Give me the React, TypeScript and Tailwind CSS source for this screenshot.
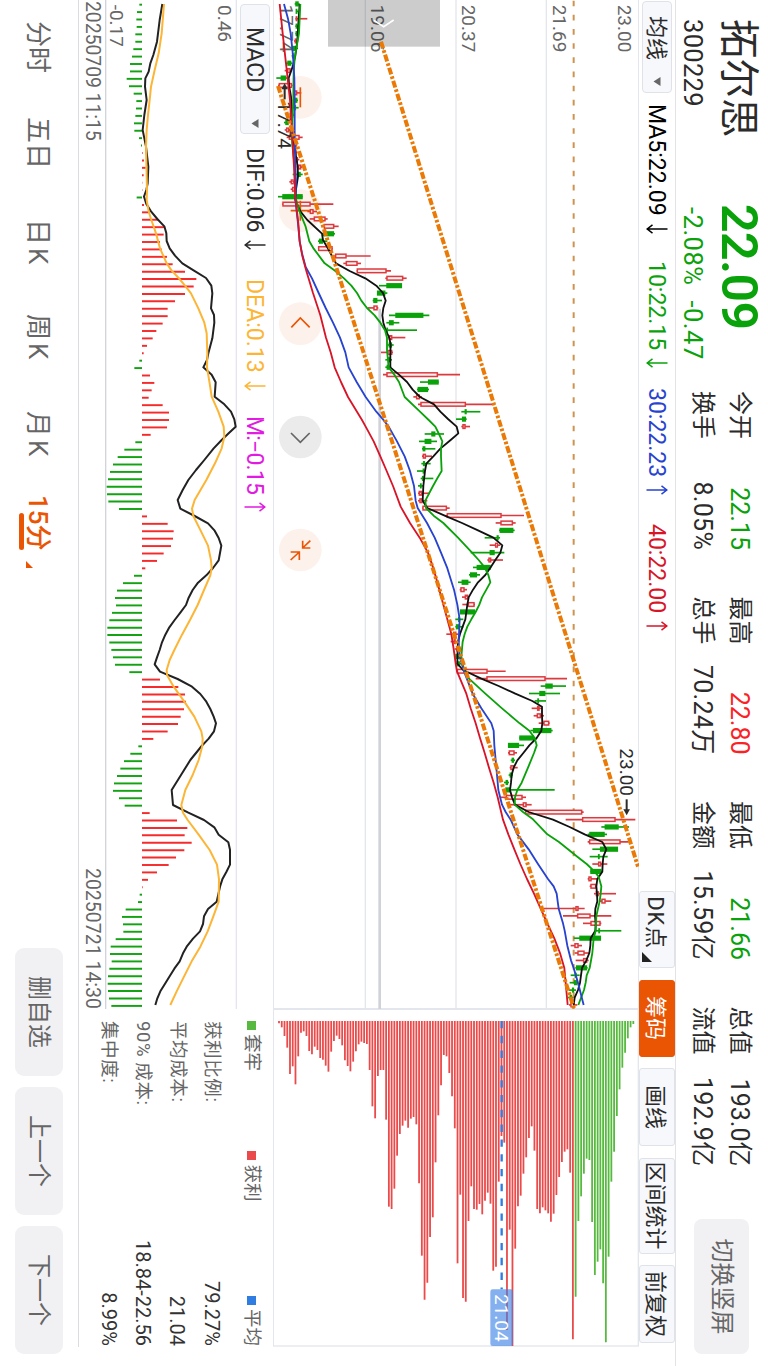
import React from 'react';
import clsx from 'clsx';

type Point = [number, number];
// [color, low, bodyLow, bodyHigh, high]
type Candle = ['r' | 'g', number, number, number, number];

const GREEN = '#0aa20a';
const RED = '#dc3a3e';
const ORANGE = '#ea5504';
const GRID = '#e3e6ec';

const candles: Candle[] = [
  ['g', 80, 82, 92, 95], ['g', 84, 85, 88, 90], ['r', 82, 84, 88, 118], ['g', 82, 84, 88, 90],
  ['g', 82, 84, 88, 90], ['r', 78, 80, 86, 88], ['g', 72, 75, 84, 90], ['g', 71, 73, 77, 80],
  ['g', 54, 58, 70, 73], ['r', 50, 57, 68, 72], ['g', 25, 38, 54, 60], ['r', 30, 32, 72, 74],
  ['r', 75, 78, 88, 100], ['g', 74, 76, 88, 90], ['g', 75, 78, 84, 92], ['r', 68, 70, 76, 78],
  ['g', 48, 52, 62, 66], ['r', 50, 54, 64, 68], ['r', 56, 62, 95, 104], ['r', 74, 76, 86, 88],
  ['r', 78, 80, 86, 88], ['r', 80, 82, 90, 94], ['r', 86, 90, 100, 103], ['g', 74, 88, 98, 104],
  ['r', 64, 68, 77, 80], ['r', 68, 72, 82, 84], ['g', 30, 43, 104, 104], ['r', 43, 43, 128, 196],
  ['r', 118, 125, 137, 147], ['r', 125, 137, 173, 179], ['r', 160, 167, 199, 212], ['g', 163, 165, 198, 201],
  ['g', 150, 153, 165, 178], ['r', 150, 150, 194, 194], ['r', 198, 201, 236, 308], ['r', 226, 233, 269, 279],
  ['r', 266, 266, 356, 369], ['r', 352, 355, 406, 416], ['g', 333, 355, 402, 402], ['g', 327, 327, 352, 358],
  ['g', 314, 316, 328, 342], ['r', 300, 316, 329, 331], ['g', 363, 382, 466, 484], ['g', 355, 363, 377, 394],
  ['g', 352, 355, 360, 447], ['r', 360, 362, 373, 412], ['g', 358, 362, 372, 377], ['r', 339, 358, 373, 375],
  ['g', 352, 360, 366, 372], ['g', 352, 356, 364, 370], ['r', 345, 355, 510, 576], ['g', 456, 480, 512, 512],
  ['g', 447, 449, 480, 483], ['r', 436, 444, 456, 462], ['r', 450, 457, 594, 680], ['g', 580, 590, 596, 637],
  ['g', 564, 582, 594, 596], ['r', 580, 583, 593, 606], ['g', 470, 490, 502, 528], ['g', 453, 470, 490, 507],
  ['g', 462, 464, 472, 502], ['r', 462, 464, 474, 492], ['g', 460, 465, 471, 488], ['g', 447, 466, 469, 470],
  ['g', 458, 462, 467, 496], ['g', 450, 456, 461, 466], ['r', 450, 452, 463, 486], ['r', 450, 454, 464, 478],
  ['r', 463, 463, 537, 545], ['r', 533, 536, 701, 768], ['r', 683, 697, 735, 743], ['g', 693, 695, 736, 740],
  ['g', 650, 686, 692, 696], ['r', 665, 681, 690, 697], ['g', 608, 665, 680, 709], ['r', 658, 661, 670, 705],
  ['g', 615, 626, 668, 670], ['g', 603, 606, 627, 636], ['g', 570, 581, 601, 608], ['r', 575, 577, 590, 597],
  ['r', 582, 590, 601, 603], ['r', 583, 599, 620, 621], ['g', 576, 576, 621, 621], ['g', 562, 570, 575, 586],
  ['g', 562, 564, 574, 586], ['r', 535, 555, 565, 570], ['r', 548, 557, 563, 575], ['r', 560, 565, 578, 580],
  ['g', 558, 562, 575, 578], ['g', 562, 566, 576, 580], ['r', 566, 566, 659, 713], ['r', 623, 655, 833, 897],
  ['g', 818, 832, 854, 894], ['g', 783, 814, 832, 876], ['g', 800, 808, 813, 834], ['r', 791, 807, 815, 822],
  ['r', 797, 806, 819, 828], ['r', 812, 826, 844, 845], ['g', 787, 795, 850, 854], ['g', 754, 754, 798, 800],
  ['g', 720, 720, 753, 768], ['r', 720, 722, 740, 747], ['g', 728, 731, 738, 741], ['r', 725, 727, 738, 749],
  ['g', 722, 725, 733, 735], ['g', 708, 713, 720, 723], ['g', 712, 712, 727, 860], ['r', 698, 713, 764, 774],
  ['r', 721, 764, 776, 791], ['r', 771, 771, 943, 947], ['r', 893, 942, 1043, 1102], ['g', 1000, 1010, 1052, 1083],
  ['g', 959, 964, 1010, 1017], ['r', 959, 963, 1058, 1082], ['g', 973, 996, 1050, 1050], ['g', 965, 990, 995, 1019],
  ['r', 973, 990, 1000, 1018], ['g', 967, 967, 1000, 1002], ['r', 959, 961, 971, 990], ['r', 965, 967, 985, 987],
  ['r', 978, 983, 993, 1044], ['r', 995, 1000, 1013, 1030], ['r', 828, 922, 932, 950], ['r', 885, 927, 968, 1030],
  ['r', 945, 967, 998, 1000], ['g', 980, 991, 996, 1060], ['g', 917, 934, 999, 999], ['r', 908, 919, 932, 942],
  ['r', 920, 928, 950, 965], ['r', 923, 945, 958, 962], ['g', 922, 924, 957, 959], ['g', 908, 920, 926, 935],
  ['g', 905, 918, 928, 930], ['g', 902, 912, 918, 924], ['g', 900, 905, 912, 915], ['r', 903, 907, 920, 928],
];

const ma5: Point[] = [
  [12, 95], [56, 92], [123, 88], [167, 82], [200, 74], [234, 62], [256, 63], [290, 69], [345, 72], [410, 74],
  [445, 80], [480, 86], [501, 89], [530, 90], [568, 84], [600, 82], [634, 97], [660, 118], [701, 162], [720, 165],
  [746, 180], [768, 192], [790, 204], [813, 245], [835, 292], [857, 325], [879, 345], [902, 353], [924, 346],
  [946, 343], [968, 346], [991, 353], [1013, 364], [1035, 368], [1057, 367], [1102, 367], [1124, 393],
  [1146, 417], [1169, 434], [1191, 456], [1213, 498], [1235, 517], [1257, 540], [1280, 566], [1300, 571],
  [1320, 548], [1346, 517], [1369, 496], [1391, 475], [1413, 471], [1458, 466], [1502, 464], [1524, 478],
  [1547, 530], [1569, 582], [1591, 630], [1613, 676], [1636, 703], [1658, 697], [1680, 682], [1702, 668],
  [1725, 652], [1747, 630], [1769, 615], [1792, 602], [1814, 598], [1836, 595], [1858, 592], [1880, 584],
  [1902, 576], [1925, 570], [1947, 569], [1991, 568], [2010, 585], [2036, 640], [2058, 692], [2081, 742],
  [2103, 793], [2120, 822], [2148, 822], [2170, 823], [2192, 820], [2214, 806], [2236, 784], [2259, 766],
  [2281, 748], [2303, 737], [2325, 731], [2348, 729], [2370, 726], [2392, 732], [2414, 741], [2436, 782],
  [2459, 855], [2481, 905], [2503, 950], [2526, 1003], [2548, 1015], [2570, 1006], [2592, 1004], [2615, 1003],
  [2637, 988], [2659, 985], [2681, 987], [2704, 988], [2726, 982], [2748, 981], [2770, 983], [2792, 982],
  [2815, 968], [2837, 967], [2859, 964], [2881, 955], [2904, 942], [2926, 939], [2948, 936], [2970, 930],
  [2993, 920], [3015, 917],
];

const ma10: Point[] = [
  [12, 97], [100, 93], [167, 81], [212, 77], [300, 76], [400, 71], [434, 73], [500, 80], [590, 82], [633, 94],
  [680, 113], [724, 124], [746, 137], [790, 170], [813, 202], [835, 228], [857, 250], [879, 267], [902, 280],
  [924, 297], [946, 320], [968, 337], [991, 351], [1013, 357], [1050, 357], [1102, 362], [1124, 379],
  [1146, 393], [1191, 410], [1235, 456], [1260, 482], [1280, 502], [1302, 513], [1324, 523], [1346, 519],
  [1369, 519], [1413, 521], [1435, 508], [1458, 495], [1502, 472], [1524, 474], [1547, 497], [1569, 526],
  [1613, 570], [1658, 612], [1680, 632], [1702, 650], [1725, 661], [1747, 667], [1769, 655], [1792, 642],
  [1814, 634], [1836, 623], [1858, 610], [1880, 598], [1902, 590], [1925, 584], [1947, 582], [1969, 580],
  [2014, 589], [2036, 603], [2081, 652], [2125, 702], [2170, 755], [2192, 784], [2214, 800], [2236, 806],
  [2259, 798], [2303, 780], [2348, 761], [2370, 748], [2392, 741], [2414, 740], [2436, 765], [2458, 795],
  [2503, 838], [2526, 873], [2570, 928], [2592, 956], [2615, 980], [2630, 992], [2659, 1000], [2681, 998],
  [2704, 995], [2748, 985], [2792, 983], [2815, 977], [2859, 973], [2904, 965], [2926, 956], [2948, 953],
  [2970, 948], [3015, 931],
];

const ma30: Point[] = [
  [12, 48], [56, 60], [100, 68], [167, 75], [234, 79], [300, 80], [400, 80], [500, 82], [545, 84], [600, 82],
  [670, 90], [724, 95], [760, 102], [801, 113], [835, 132], [879, 152], [924, 173], [968, 195], [1013, 216],
  [1057, 232], [1102, 242], [1146, 266], [1191, 293], [1235, 325], [1258, 345], [1280, 362], [1324, 387],
  [1369, 410], [1413, 426], [1458, 438], [1502, 443], [1524, 449], [1569, 477], [1613, 500], [1658, 519],
  [1702, 537], [1747, 551], [1769, 558], [1814, 568], [1858, 575], [1925, 572], [1970, 575], [2014, 588],
  [2081, 614], [2125, 640], [2170, 670], [2192, 677], [2236, 679], [2281, 683], [2325, 687], [2370, 691],
  [2414, 702], [2436, 713], [2459, 728], [2503, 748], [2548, 782], [2592, 810], [2637, 840], [2659, 857],
  [2681, 866], [2704, 869], [2726, 872], [2770, 885], [2792, 890], [2837, 898], [2881, 909], [2904, 917],
  [2948, 930], [3015, 947],
];

const ma40: Point[] = [
  [12, 35], [100, 44], [200, 55], [300, 66], [400, 72], [500, 78], [590, 82], [670, 91], [724, 95], [768, 103],
  [813, 115], [879, 135], [946, 157], [1013, 174], [1057, 188], [1102, 200], [1146, 219], [1191, 240],
  [1260, 282], [1280, 293], [1324, 317], [1369, 337], [1413, 356], [1458, 375], [1520, 398], [1569, 426],
  [1613, 455], [1658, 480], [1702, 495], [1747, 508], [1792, 520], [1858, 538], [1902, 550], [1947, 557],
  [1991, 563], [2014, 567], [2081, 595], [2125, 608], [2170, 623], [2214, 636], [2259, 650], [2303, 663],
  [2348, 677], [2392, 689], [2459, 705], [2503, 721], [2548, 739], [2592, 757], [2637, 777], [2681, 798],
  [2726, 818], [2770, 838], [2815, 859], [2859, 876], [2904, 889], [2948, 893], [3015, 899],
];

const MACD_BASE = 216;
const macdBars = [
  208, 201, 199, 200, 196, 196, 190, 186, 180, 180, 170, 177, 191, 199, 198, 196, 192, 193, 207, 213,
  218, 222, 227, 221, 217, 217, 200, 222, 240, 265, 285, 281, 270, 275, 291, 308, 345, 379, 371, 345,
  315, 293, 293, 278, 259, 248, 231, 221, 208, 193, 240, 253, 245, 236, 278, 297, 297, 291, 242, 196,
  163, 143, 129, 120, 114, 110, 111, 115, 147, 231, 293, 311, 309, 303, 281, 261, 226, 192, 159, 141,
  135, 138, 126, 118, 112, 112, 118, 124, 129, 135, 178, 270, 325, 345, 348, 342, 332, 324, 293, 250,
  205, 181, 162, 151, 141, 132, 129, 147, 164, 239, 321, 352, 344, 365, 343, 318, 296, 261, 234, 218,
  209, 204, 167, 156, 159, 160, 137, 122, 120, 125, 118, 114, 113, 114, 117, 124,
];

const dif: Point[] = [
  [12, 277], [60, 269], [125, 261], [165, 250], [190, 241], [215, 236], [235, 226], [260, 225], [300, 230],
  [345, 223], [390, 218], [410, 222], [440, 228], [500, 235], [550, 233], [570, 229], [590, 222], [612, 229],
  [634, 243], [657, 262], [679, 283], [700, 289], [723, 290], [745, 299], [767, 315], [790, 337], [812, 372],
  [834, 408], [857, 424], [880, 427], [925, 423], [945, 432], [968, 433], [1015, 427], [1060, 415], [1080, 411],
  [1102, 400], [1124, 425], [1147, 437], [1190, 434], [1213, 463], [1235, 483], [1258, 493], [1280, 497],
  [1300, 476], [1320, 455], [1345, 431], [1380, 403], [1410, 378], [1440, 355], [1470, 338], [1500, 323],
  [1526, 331], [1548, 374], [1570, 414], [1592, 434], [1614, 446], [1637, 454], [1659, 450], [1681, 446],
  [1704, 429], [1726, 409], [1748, 384], [1770, 368], [1793, 356], [1815, 348], [1838, 331], [1860, 314],
  [1882, 298], [1904, 286], [1927, 276], [1950, 269], [1972, 261], [1993, 254], [2015, 270], [2037, 323],
  [2060, 366], [2082, 391], [2105, 409], [2127, 421], [2150, 431], [2170, 438], [2194, 432], [2216, 416],
  [2238, 395], [2280, 361], [2325, 333], [2370, 305], [2415, 309], [2438, 355], [2460, 402], [2482, 433],
  [2504, 446], [2527, 475], [2549, 480], [2594, 480], [2616, 469], [2638, 457], [2660, 450], [2683, 445],
  [2705, 440], [2727, 414], [2749, 402], [2772, 399], [2794, 390], [2816, 369], [2840, 350], [2860, 339],
  [2884, 329], [2906, 313], [2930, 298], [2950, 286], [2974, 271], [2995, 262], [3015, 256],
];

const dea: Point[] = [
  [12, 282], [100, 275], [160, 266], [210, 254], [260, 243], [300, 239], [345, 234], [390, 230], [440, 228],
  [570, 231], [600, 230], [634, 236], [657, 243], [700, 258], [745, 270], [790, 290], [812, 305], [834, 326],
  [857, 345], [880, 363], [925, 385], [968, 403], [1000, 410], [1060, 412], [1102, 411], [1150, 419],
  [1190, 425], [1235, 445], [1280, 461], [1310, 463], [1345, 455], [1390, 435], [1440, 409], [1500, 374],
  [1526, 366], [1548, 370], [1592, 392], [1637, 414], [1681, 423], [1704, 425], [1726, 421], [1770, 402],
  [1815, 383], [1860, 360], [1904, 336], [1950, 313], [1980, 299], [2010, 290], [2025, 291], [2060, 311],
  [2105, 343], [2150, 373], [2194, 394], [2216, 398], [2238, 397], [2280, 386], [2325, 368], [2370, 346],
  [2415, 334], [2438, 339], [2460, 353], [2504, 386], [2550, 419], [2594, 441], [2638, 447], [2705, 446],
  [2749, 430], [2794, 413], [2840, 391], [2884, 365], [2930, 342], [2974, 320], [3015, 301],
];

// right edge of every chip bar, from the lowest price up
const chips = [
  70, 82, 108, 143, 222, 199, 253, 169, 98, 94, 108, 153, 163, 140, 150, 174, 179, 197, 215, 155,
  123, 107, 117, 136, 181, 198, 214, 185, 154, 133, 125, 129, 132, 210, 319, 355, 228, 210, 210, 359,
  620, 627, 566, 467, 402, 377, 362, 383, 356, 351, 373, 550, 767, 899, 848, 711, 652, 487, 346, 256,
  165, 169, 219, 289, 385, 790, 584, 894, 905, 663, 559, 627, 629, 612, 643, 602, 578, 611, 812, 800,
  545, 408, 428, 990, 689, 1038, 746, 619, 587, 521, 472, 414, 379, 452, 627, 640, 622, 631, 640, 665,
  641, 585, 531, 486, 455, 448, 518, 1018, 890, 663, 589, 521, 476, 480, 666, 825, 785, 748, 850, 1027,
  770, 545, 455, 348, 268, 203, 158, 115, 82, 72,
];
const FIRST_TRAPPED = 108;

const toLine = (points: Point[], top: number) => points.map(([x, v]) => `${x},${top - v}`).join(' ');

const Arrow = ({ up = false }: { up?: boolean }) => (
  <svg
    width="10"
    height="22"
    viewBox="0 0 10 22"
    fill="none"
    stroke="currentColor"
    strokeWidth="1.5"
    className={clsx('ml-[8px] shrink-0', up && 'rotate-180')}
  >
    <path d="M5 0.5V20.5M0.8 15.5L5 20.8L9.2 15.5" />
  </svg>
);

const Caret = () => (
  <svg width="9" height="8" viewBox="0 0 9 8" className="shrink-0" fill="#666">
    <path d="M0 0.5H9L4.5 7.5Z" />
  </svg>
);

interface IndicatorProps {
  label: string;
  up?: boolean;
  className: string;
}

const Indicator = ({ label, up, className }: IndicatorProps) => (
  <div className={clsx('flex shrink-0 items-center whitespace-nowrap', className)}>
    <span>{label}</span>
    <Arrow up={up} />
  </div>
);

const quotes = [
  { top: ['今开', '22.15', 'text-[#0aa20a]'], bottom: ['换手', '8.05%'], width: 'w-[159px]' },
  { top: ['最高', '22.80', 'text-[#fb2226]'], bottom: ['总手', '70.24万'], width: 'w-[158px]' },
  { top: ['最低', '21.66', 'text-[#0aa20a]'], bottom: ['金额', '15.59亿'], width: 'w-[159px]' },
  { top: ['总值', '193.0亿', ''], bottom: ['流值', '192.9亿'], width: 'w-[160px]' },
];

const Header = () => (
  <header className="flex h-[93px] border-b border-[#e3e3e6] text-[#2b2b2b]">
    <div className="ml-[19px] w-[186px]">
      <div className="mt-[11px] text-[39.5px] leading-[37px]">拓尔思</div>
      <div className="mt-[14px] text-[25.5px] leading-[26px] tracking-[0.3px]">300229</div>
    </div>
    <div className="w-[186px] text-[#0aa20a]">
      <div className="-ml-px mt-[4px] text-[50px] leading-[50px] font-semibold tracking-[-0.6px]">22.09</div>
      <div className="mt-[8px] ml-[2px] flex gap-[15px] text-[25.5px] leading-[26px] tracking-[0.5px]">
        <span>-2.08%</span>
        <span>-0.47</span>
      </div>
    </div>
    <div className="flex gap-[46.5px]">
      {quotes.map((q) => (
        <div key={q.top[0]} className={clsx('text-[24px] leading-[37px]', q.width)}>
          <div className="mt-[10px] flex justify-between">
            <span>{q.top[0]}</span>
            <span className={clsx('text-[25px]', q.top[2])}>{q.top[1]}</span>
          </div>
          <div className="flex justify-between">
            <span>{q.bottom[0]}</span>
            <span className="text-[25px] tracking-[0.3px]">{q.bottom[1]}</span>
          </div>
        </div>
      ))}
    </div>
    <button className="mt-[19px] ml-[52.5px] h-[55px] w-[135px] rounded-lg bg-[#f1f1f4] pb-px text-[24px] text-[#666]">
      切换竖屏
    </button>
  </header>
);

const tools = [
  { label: 'DK点', className: 'w-[77px] tracking-[0.8px]', more: true },
  { label: '筹码', className: 'w-[77px]', active: true },
  { label: '画线', className: 'w-[78px]' },
  { label: '区间统计', className: 'w-[96px]' },
  { label: '前复权', className: 'w-[78px]' },
];

const Toolbar = () => (
  <div className="flex h-[36px] items-center text-[23px] leading-none">
    <button className="ml-px flex h-[30px] w-[92px] items-center gap-[17px] rounded-[4px] border border-[#dfe2e8] bg-[#f6f8fb] pl-[14px] text-[22px] text-[#2b2b2b]">
      <span className="pt-[2px]">均线</span>
      <Caret />
    </button>
    <div className="flex w-[798px] pl-[11px]">
      <Indicator label="MA5:22.09" className="w-[157px] text-black" />
      <Indicator label="10:22.15" className="w-[127px] text-[#0aa20a]" />
      <Indicator label="30:22.23" up className="w-[136px] text-[#2743cf]" />
      <Indicator label="40:22.00" up className="text-[#d81528]" />
    </div>
    <div className="flex gap-[11.5px] text-[22px]">
      {tools.map((t) => (
        <button
          key={t.label}
          className={clsx(
            'relative h-[36px] rounded-[3px] border pt-[3px] whitespace-nowrap',
            t.active ? 'border-[#ea5504] bg-[#ea5504] text-white' : 'border-[#dfe2e8] bg-[#f6f8fb] text-[#2b2b2b]',
            t.more && 'pr-[14px]',
            t.className,
          )}
        >
          {t.label}
          {t.more && (
            <svg width="10" height="10" viewBox="0 0 10 10" className="absolute right-[5px] bottom-[2px]">
              <path d="M10 0V10H0Z" fill="#222" />
            </svg>
          )}
        </button>
      ))}
    </div>
  </div>
);

// Chart units are thirds of a pixel, levels grow upwards.
const K_TOP = 1113;

const PriceChart = () => (
  <svg width="1009" height="366" viewBox="0 0 3027 1098" className="block shrink-0">
    {[1112, 835, 564, 292, 16].map((v) => (
      <line key={v} x1="0" x2="3027" y1={K_TOP - v} y2={K_TOP - v} stroke={GRID} strokeWidth="4" />
    ))}
    <line x1="3026" x2="3026" y1="0" y2="1098" stroke={GRID} strokeWidth="4" />
    <line x1="926" x2="3027" y1={K_TOP - 335} y2={K_TOP - 335} stroke="#cfd2d9" strokeWidth="8" />
    <line x1="2" x2="3027" y1={K_TOP - 917} y2={K_TOP - 917} stroke="#cf9350" strokeWidth="6" strokeDasharray="17 25.5" />

    {[292, 632, 971, 1650].map((x) => (
      <circle key={x} cx={x} cy={K_TOP - 97} r="64" fill="#fdf1eb" />
    ))}
    <circle cx="1311" cy={K_TOP - 97} r="64" fill="#ebebeb" />

    <g fill="#666" fontSize="57">
      <text x="14" y={K_TOP - 1050}>23.00</text>
      <text x="14" y={K_TOP - 854}>21.69</text>
      <text x="14" y={K_TOP - 583}>20.37</text>
      <text x="14" y={K_TOP - 308}>19.06</text>
      <text x="14" y={K_TOP - 37}>17.74</text>
    </g>

    <rect x="0" y={K_TOP - 516} width="140" height="336" fill="#000" fillOpacity="0.2" />
    <path d={`M60 ${K_TOP - 377}L80 ${K_TOP - 347}L61 ${K_TOP - 318}`} fill="none" stroke="#fff" strokeWidth="5" />

    {candles.map(([color, low, bodyLow, bodyHigh, high], i) => {
      const x = 11.7 + i * 22.245;
      const stroke = color === 'g' ? GREEN : RED;
      return (
        <g key={i} stroke={stroke}>
          <line x1={x} x2={x} y1={K_TOP - low} y2={K_TOP - high} strokeWidth="5" />
          <rect
            x={x - 5.5}
            y={K_TOP - bodyHigh + 2}
            width="11"
            height={Math.max(bodyHigh - bodyLow - 4, 1)}
            fill={color === 'g' ? GREEN : '#fdf0f0'}
            strokeWidth="4.5"
          />
        </g>
      );
    })}

    <g fill="none" stroke={ORANGE} strokeWidth="5">
      <path d={`M262 ${K_TOP - 97}H322`} />
      <path d={`M602 ${K_TOP - 97}H662M632 ${K_TOP - 68}V${K_TOP - 127}`} />
      <path d={`M982 ${K_TOP - 125}L954 ${K_TOP - 97}L982 ${K_TOP - 70}`} />
      <path d={`M1299 ${K_TOP - 125}L1327 ${K_TOP - 97}L1299 ${K_TOP - 69}`} stroke="#666" />
      <path
        d={`M1622 ${K_TOP - 104}H1644V${K_TOP - 127}M1644 ${K_TOP - 104}L1622 ${K_TOP - 127}M1680 ${K_TOP - 94}H1656V${K_TOP - 68}M1656 ${K_TOP - 94}L1680 ${K_TOP - 68}`}
      />
    </g>

    <g fill="#2b2b2b" fontSize="57">
      <path d={`M250 ${K_TOP - 50}L268 ${K_TOP - 60}V${K_TOP - 40}Z`} />
      <path d={`M262 ${K_TOP - 50}H298`} stroke="#2b2b2b" strokeWidth="6" />
      <text x="304" y={K_TOP - 29}>17.74</text>
      <text x="2245" y={K_TOP - 1056}>23.00</text>
      <path d={`M2398 ${K_TOP - 1076}H2432`} stroke="#2b2b2b" strokeWidth="6" />
      <path d={`M2446 ${K_TOP - 1076}L2428 ${K_TOP - 1086}V${K_TOP - 1066}Z`} />
    </g>

    <g fill="none" strokeWidth="5.5" strokeLinejoin="round">
      <polyline points={toLine(ma5, K_TOP)} stroke="#111" />
      <polyline points={toLine(ma10, K_TOP)} stroke={GREEN} />
      <polyline points={toLine(ma30, K_TOP)} stroke="#2743cf" />
      <polyline points={toLine(ma40, K_TOP)} stroke="#d81528" />
    </g>
    <g stroke="#ea7a05" strokeWidth="12" strokeDasharray="21 6 8 6">
      <line x1="125" y1={K_TOP - 339} x2="2600" y2={K_TOP - 1110} />
      <line x1="258" y1={K_TOP - 30} x2="3025" y2={K_TOP - 918} />
    </g>
  </svg>
);

const M_TOP = 501;

const MacdChart = () => (
  <svg width="1009" height="132" viewBox="0 0 3027 396" className="block">
    <line x1="0" x2="3027" y1={M_TOP - 499} y2={M_TOP - 499} stroke={GRID} strokeWidth="4" />
    <line x1="0" x2="3027" y1={M_TOP - 107} y2={M_TOP - 107} stroke="#d3d3da" strokeWidth="4" />
    {macdBars.map((v, i) => {
      const x = 14 + i * 22.25;
      return (
        <line
          key={i}
          x1={x}
          x2={x}
          y1={M_TOP - MACD_BASE}
          y2={M_TOP - v}
          stroke={v < MACD_BASE ? '#12a212' : '#f62a2a'}
          strokeWidth="5.8"
        />
      );
    })}
    <g fill="#666" fontSize="57">
      <text x="15" y={M_TOP - 444}>0.46</text>
      <text x="14" y={M_TOP - 120}>-0.17</text>
    </g>
    <g fill="none" strokeWidth="6" strokeLinejoin="round">
      <polyline points={toLine(dif, M_TOP)} stroke="#222" />
      <polyline points={toLine(dea, M_TOP)} stroke="#fcb535" />
    </g>
  </svg>
);

const ChipChart = () => (
  <svg width="338" height="366" viewBox="0 0 1014 1098" className="block">
    <rect x="1" y="2" width="1010" height="1095" fill="none" stroke={GRID} strokeWidth="4" />
    {chips.map((v, i) => {
      const y = K_TOP - (33 + i * 8.24);
      return (
        <line
          key={i}
          x1="36"
          x2={v - 27}
          y1={y}
          y2={y}
          stroke={i < FIRST_TRAPPED ? '#ea4a4a' : '#57b93f'}
          strokeWidth="5.4"
        />
      );
    })}
    <line x1="36" x2="841" y1={K_TOP - 701} y2={K_TOP - 701} stroke="#2f7de1" strokeWidth="7" strokeDasharray="22 22.4" />
    <rect x="841" y={K_TOP - 735} width="170" height="68" rx="7" fill="#3c82e6" fillOpacity="0.63" />
    <text x="855" y={K_TOP - 681} fill="#fff" fontSize="57">21.04</text>
  </svg>
);

const stats = [
  ['获利比例:', '79.27%'],
  ['平均成本:', '21.04'],
  ['90% 成本:', '18.84-22.56'],
  ['集中度:', '8.99%'],
];

const ChipStats = () => (
  <div className="pl-[12px] text-[18.5px] leading-none text-[#666]">
    <div className="mt-[6px] flex h-[30px] items-center justify-between">
      <span className="flex items-center gap-[4px]">
        <i className="size-[9px] bg-[#57b93f]" />
        套牢
      </span>
      <span className="ml-[28px] flex items-center gap-[4px]">
        <i className="size-[9px] bg-[#ea4a4a]" />
        获利
      </span>
      <span className="ml-[42px] flex items-center gap-[4px]">
        <i className="size-[9px] bg-[#2f7de1]" />
        平均
      </span>
    </div>
    <div className="mt-[8px]">
      {stats.map(([label, value]) => (
        <div key={label} className="flex h-[34.4px] items-center justify-between">
          <span className="tracking-[0.6px]">{label}</span>
          <span className="text-[20px] text-[#333]">{value}</span>
        </div>
      ))}
    </div>
  </div>
);

const periods = [
  { label: '分时', className: 'w-[96px]' },
  { label: '五日', className: 'w-[102px]' },
  { label: '日K', className: 'w-[95px] tracking-[3px]' },
  { label: '周K', className: 'w-[97px] tracking-[3px]' },
  { label: '月K', className: 'w-[84px] tracking-[3px]' },
];

const Footer = () => (
  <footer className="flex h-[78px] items-center pl-[21px] text-[26px] leading-none text-[#666]">
    {periods.map((p) => (
      <span key={p.label} className={clsx('pt-[2px]', p.className)}>
        {p.label}
      </span>
    ))}
    <span className="relative w-[453px] pt-[2px] font-medium text-[#ea5504]">
      15分
      <i className="absolute top-[29px] left-[18px] h-[5px] w-[37px] rounded-full bg-[#ea5504]" />
      <svg width="7" height="7" viewBox="0 0 7 7" className="absolute top-[20px] left-[66px]">
        <path d="M7 0V7H0Z" fill={ORANGE} />
      </svg>
    </span>
    <div className="flex gap-[11px] text-[24px]">
      {['删自选', '上一个', '下一个'].map((label) => (
        <button key={label} className="h-[48px] w-[128px] rounded-[9px] bg-[#f1f1f4]">
          {label}
        </button>
      ))}
    </div>
  </footer>
);

const App: React.FC = () => {
  return (
    <div className="h-[1366px] w-[768px] overflow-hidden bg-white">
      {/* landscape screen turned clockwise */}
      <div className="flex h-[768px] w-[1366px] origin-top-left translate-x-[768px] rotate-90 flex-col bg-white font-[Roboto,'Noto_Sans_CJK_SC',sans-serif]">
        <Header />
        <Toolbar />
        <div className="flex">
          <div className="w-[1009px]">
            <PriceChart />
            <div className="flex h-[36px] items-center text-[23px] leading-none">
              <button className="ml-[4px] flex h-[30px] w-[130px] items-center gap-[27px] rounded-[4px] border border-[#dfe2e8] bg-[#f6f8fb] pl-[22px] text-[#2b2b2b]">
                MACD
                <Caret />
              </button>
              <Indicator label="DIF:0.06" className="ml-[14px] w-[131px] text-[#2b2b2b]" />
              <Indicator label="DEA:0.13" className="w-[137px] text-[#fcb535]" />
              <Indicator label="M:−0.15" up className="tracking-[-0.8px] text-[#e11be1]" />
            </div>
            <MacdChart />
            <div className="flex h-[26px] items-center justify-between pl-px text-[19.5px] leading-none text-[#666]">
              <span className="tracking-[-0.1px]">20250709 11:15</span>
              <span>20250721 14:30</span>
            </div>
          </div>
          <div className="w-[337px]">
            <ChipChart />
            <ChipStats />
          </div>
        </div>
        <div className="h-px w-[1347px] bg-[#dcdce0]" />
        <Footer />
      </div>
    </div>
  );
};

export default App;
